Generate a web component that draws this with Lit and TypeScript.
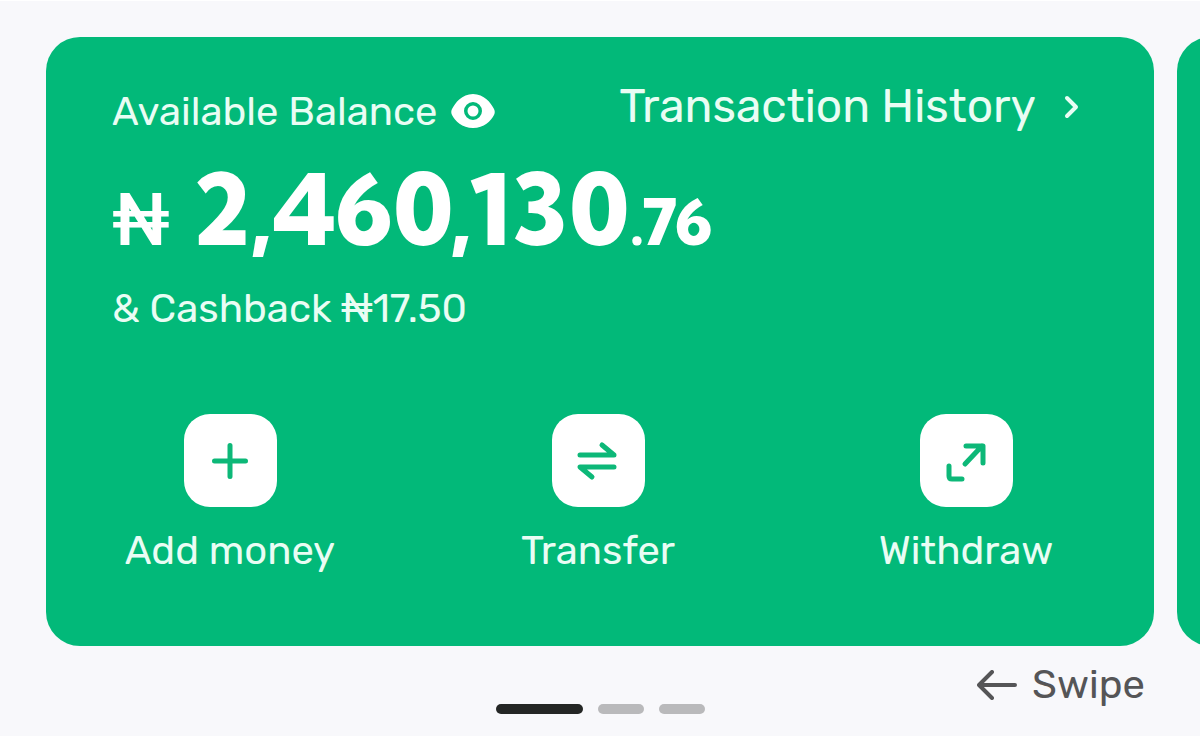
import { LitElement, html, css, svg } from "lit";
import { customElement, property } from "lit/decorators.js";

const icons = {
  add: svg`<path d="M23 7.500v31M7.500 23h31"></path>`,
  transfer: svg`<path d="M5 17h34L27 7M39 29H5l12 10"></path>`,
  withdraw: svg`<path d="M22 26 39 8M23 8h17v17"></path><path d="M6 28v10q0 3 3 3h10"></path>`,
};

type IconName = keyof typeof icons;

@customElement("card-action")
export class CardAction extends LitElement {
  static styles = css`
    :host {
      display: block;
    }
    .action {
      display: flex;
      flex-direction: column;
      align-items: center;
      gap: 20px;
      width: 100%;
      padding: 0;
      border: 0;
      background: none;
      color: #e9fdf4;
      font: 400 40px/48px Rubik, Roboto, sans-serif;
      cursor: pointer;
    }
    .tile {
      display: grid;
      place-items: center;
      width: 93px;
      height: 93px;
      border-radius: 26px;
      background: #fff;
    }
    .icon {
      width: 46px;
      height: 46px;
      fill: none;
      stroke: #0db878;
      stroke-width: 5;
      stroke-linecap: round;
      stroke-linejoin: round;
    }
  `;

  @property() icon: IconName = "add";
  @property() label = "";

  render() {
    return html`
      <button class="action" type="button">
        <span class="tile">
          <svg class="icon" viewBox="0 0 46 46" aria-hidden="true">${icons[this.icon]}</svg>
        </span>
        <span>${this.label}</span>
      </button>
    `;
  }
}

@customElement("app-root")
export class AppRoot extends LitElement {
  static styles = css`
    :host {
      display: block;
      min-height: 100vh;
      box-sizing: border-box;
      border-top: 1px solid #fff;
      border-bottom: 2px solid #fff;
      background: #f8f8fb;
      font-family: Rubik, Roboto, sans-serif;
      color: #e9fdf4;
    }
    .track {
      display: flex;
      gap: 23px;
      padding: 36px 0 0 46px;
      overflow: hidden;
    }
    .card {
      flex: 0 0 calc(100% - 46px);
      box-sizing: border-box;
      padding: 42px 0 71px;
      border-radius: 34px;
      background: #02b979;
    }
    .top {
      display: flex;
      justify-content: space-between;
      align-items: flex-start;
      padding: 0 75px 0 66px;
    }
    .caption {
      display: flex;
      align-items: center;
      gap: 13px;
      padding-top: 9px;
      font-size: 40px;
      line-height: 48px;
    }
    .eye {
      display: flex;
      padding: 0;
      border: 0;
      background: none;
      cursor: pointer;
    }
    .history {
      display: flex;
      align-items: center;
      gap: 28px;
      color: inherit;
      font-size: 46px;
      line-height: 56px;
      text-decoration: none;
    }
    .chevron {
      fill: none;
      stroke: currentColor;
      stroke-width: 4;
      stroke-linecap: round;
      stroke-linejoin: round;
    }
    .amount {
      display: flex;
      align-items: baseline;
      padding: 13px 66px 0;
      color: #fff;
      font: 800 98px/120px "Kumbh Sans", Lato, sans-serif;
    }
    .currency {
      margin-right: 22px;
      font: 500 72px/80px Rubik, Roboto, sans-serif;
    }
    .cents {
      font-size: 64px;
    }
    .cashback {
      margin: 0;
      padding: 3px 66px 0;
      font-size: 40px;
      line-height: 48px;
    }
    .actions {
      display: grid;
      grid-template-columns: repeat(3, 1fr);
      padding: 81px 4px 0 0;
    }
    .footer {
      display: grid;
      grid-template-columns: 1fr auto 1fr;
      align-items: end;
      padding: 15px 55px 21px;
    }
    .dots {
      display: flex;
      grid-column: 2;
      gap: 15px;
    }
    .dot {
      width: 46px;
      height: 10px;
      padding: 0;
      border: 0;
      border-radius: 5px;
      background: #b9b9bb;
    }
    .dot.current {
      width: 87px;
      background: #242625;
    }
    .swipe {
      display: flex;
      justify-content: flex-end;
      align-items: center;
      gap: 15px;
      padding-bottom: 5px;
      color: #555557;
      font-size: 40px;
      line-height: 48px;
    }
    .arrow {
      fill: none;
      stroke: currentColor;
      stroke-width: 4;
      stroke-linecap: round;
      stroke-linejoin: round;
    }
  `;

  render() {
    return html`
      <main class="track">
        <section class="card">
          <div class="top">
            <div class="caption">
              <span>Available Balance</span>
              <button class="eye" type="button" aria-label="Hide balance">
                <svg width="44" height="36" viewBox="0 0 44 36" aria-hidden="true">
                  <path
                    fill="#fff"
                    fill-rule="evenodd"
                    d="M22 0C33 0 40 9 43 15q1.500 3 0 6C40 27 33 34 22 34S4 27 1 21q-1.500-3 0-6C4 9 11 0 22 0Zm0 8a9 9 0 1 0 0 18 9 9 0 0 0 0-18Z"
                  ></path>
                  <circle cx="22" cy="17" r="5.500" fill="#fff"></circle>
                </svg>
              </button>
            </div>
            <a class="history" href="#history">
              <span>Transaction History</span>
              <svg class="chevron" width="15" height="24" viewBox="0 0 15 24" aria-hidden="true">
                <path d="m3 3 9 9-9 9"></path>
              </svg>
            </a>
          </div>
          <div class="amount">
            <span class="currency">₦</span><span>2,460,130</span><span class="cents">.76</span>
          </div>
          <p class="cashback">&amp; Cashback ₦17.50</p>
          <div class="actions">
            <card-action icon="add" label="Add money"></card-action>
            <card-action icon="transfer" label="Transfer"></card-action>
            <card-action icon="withdraw" label="Withdraw"></card-action>
          </div>
        </section>
        <section class="card" aria-hidden="true"></section>
      </main>
      <footer class="footer">
        <div class="dots">
          <button class="dot current" type="button" aria-label="Card 1"></button>
          <button class="dot" type="button" aria-label="Card 2"></button>
          <button class="dot" type="button" aria-label="Card 3"></button>
        </div>
        <div class="swipe">
          <svg class="arrow" width="40" height="30" viewBox="0 0 40 30" aria-hidden="true">
            <path d="M38 15H3M15 2 2 15l13 13"></path>
          </svg>
          <span>Swipe</span>
        </div>
      </footer>
    `;
  }
}
